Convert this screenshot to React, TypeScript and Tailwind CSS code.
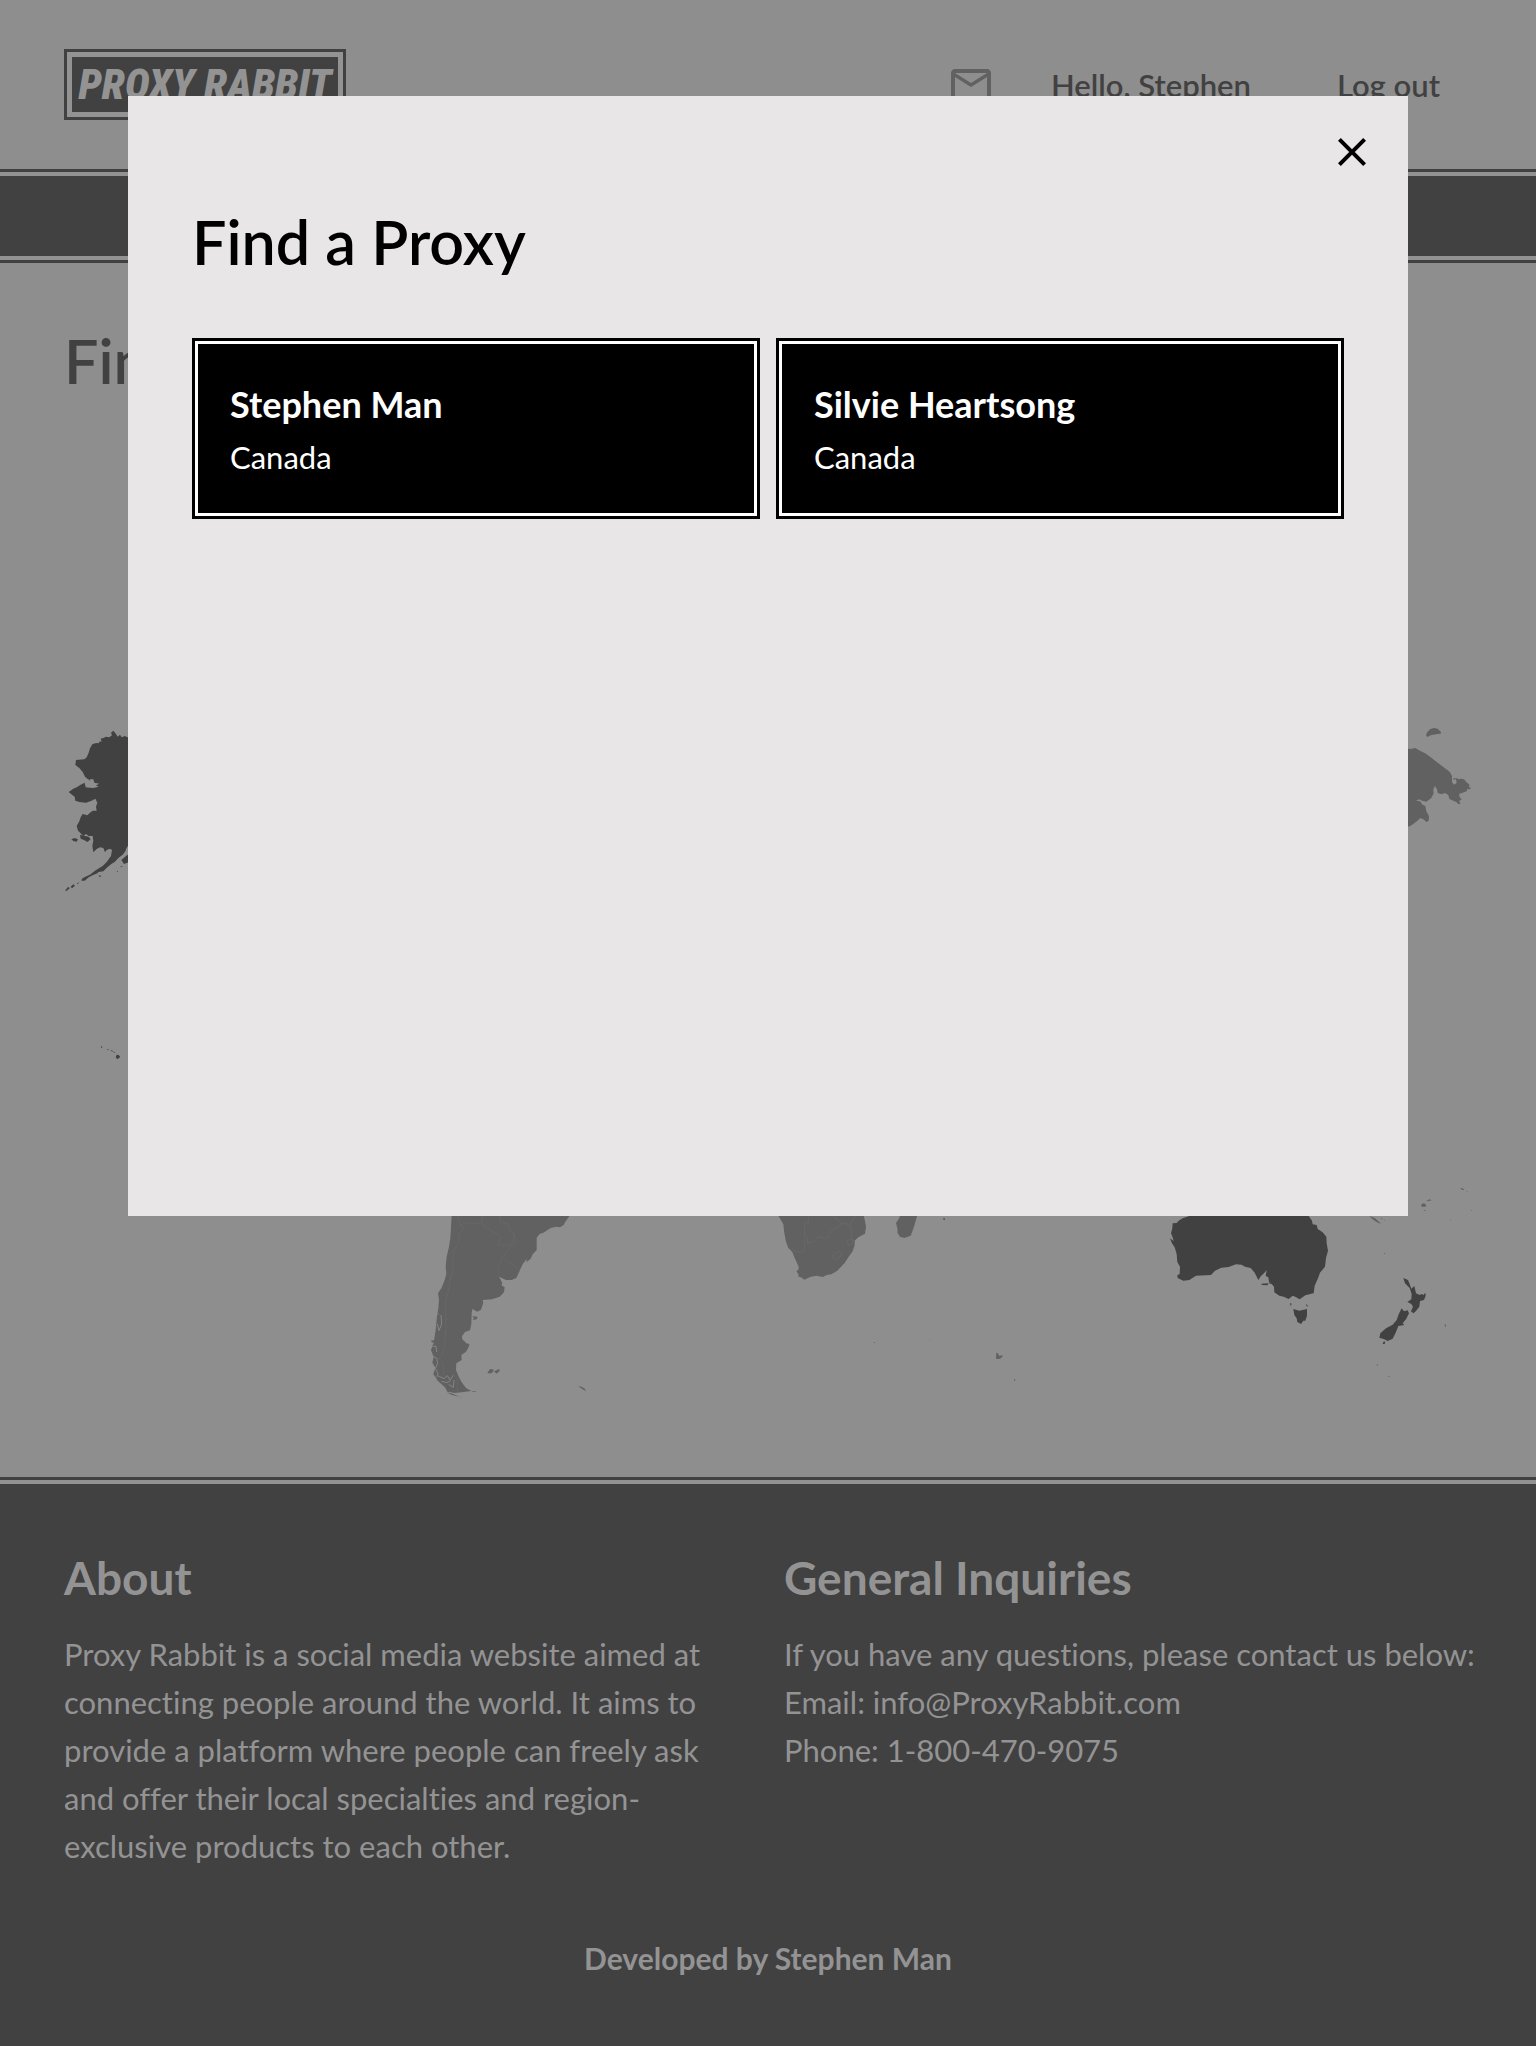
import React from "react";
import { MdClose, MdMailOutline } from "react-icons/md";

const proxies = [
  { name: "Stephen Man", country: "Canada" },
  { name: "Silvie Heartsong", country: "Canada" },
];

function Logo() {
  return (
    <a href="#home" className="flex h-[71px] w-[282px] border-3 border-[#414141] bg-[#949394] p-[5px]">
      <span className="flex min-w-0 flex-1 items-center justify-center bg-[#414141] font-['Roboto_Condensed','Open_Sans_Condensed',Lato,sans-serif] text-[42px] leading-none font-black whitespace-nowrap text-[#949394] italic">
        PROXY RABBIT
      </span>
    </a>
  );
}

function WorldMap() {
  return (
    <svg viewBox="64 720 1408 688" className="block w-full" role="img" aria-label="World map">
      <g transform="translate(50 710) scale(.33333)" fill="#414141">
        <path d="M240 78L232 82 225 78 215 82 210 74 203 80 198 72 190 62 183 68 186 76 178 82 168 80 160 84 152 86 155 96 149 94 146 100 138 99 127 103 120 115 116 128 110 142 103 148 78 150 76 165 88 174 98 186 105 200 112 206 122 212 120 207 130 208 133 218 148 221 138 226 146 230 130 234 118 233 107 232 104 218 92 224 80 232 70 236 56 246 66 254 74 260 76 272 88 276 108 278 125 272 136 266 142 278 138 290 140 302 128 302 120 308 112 316 98 312 92 322 88 334 80 348 84 362 92 370 100 378 108 372 116 378 128 378 130 392 127 408 130 427 140 417 150 412 160 414 165 427 170 420 180 416 186 420 183 438 170 456 158 468 148 474 135 482 120 494 106 500 96 506 94 512 104 512 116 502 128 496 142 490 146 486 160 484 172 472 184 462 194 456 205 444 218 434 226 424 229 415 240 400Z" />
        <path d="M90 374L105 378 116 380 122 388 112 396 102 390 92 386ZM64 388L74 384 84 388 80 395 70 393ZM214 450L228 438 240 430 240 455 222 462ZM45 542L54 531 60 534 50 542ZM62 530L70 523 75 527 66 535ZM80 521L88 516 84 522ZM146 496L155 498 148 501ZM210 470L219 468 214 472ZM200 484L204 483 203 487ZM152 1009L158 1011 154 1014ZM171 1017L177 1018 174 1021ZM180 1021L189 1022 187 1025ZM189 1024L196 1028 193 1029ZM200 1034L206 1035 211 1041 202 1048 197 1042Z" />
      </g>
      <g transform="translate(1390 710) scale(.33333)" fill="#616161">
        <path d="M108 76L112 66 121 57 132 54 143 56 153 66 152 71 143 72 122 76 112 81Z" />
        <path d="M40 114L62 117 76 114 90 122 108 131 122 142 140 156 160 171 179 185 186 198 186 216 192 224 200 219 198 208 189 209 191 205 202 205 205 208 213 206 222 208 229 216 239 225 236 231 244 234 238 238 232 237 230 244 216 249 207 252 209 262 215 268 207 274 212 280 205 283 199 276 190 272 178 267 175 255 165 249 155 253 143 249 141 238 135 228 130 238 131 250 124 264 109 275 96 272 88 268 78 272 90 274 98 284 106 288 109 304 117 319 116 332 110 336 100 328 91 324 78 336 62 347 40 356Z" />
      </g>
      <g transform="translate(410 1200) scale(.33333)" fill="#616161">
        <path d="M126 30L480 30 477 50 467 64 461 75 450 82 438 80 422 84 400 98 389 102 380 113 380 150 368 163 362 176 349 187 350 176 338 193 330 210 319 234 305 240 288 240 267 230 272 239 277 250 274 256 284 262 282 277 269 290 246 298 218 300 220 308 213 329 202 335 187 327 185 340 184 372 180 391 165 396 156 409 157 418 169 430 178 432 176 441 168 455 154 465 155 480 139 490 138 510 145 527 154 545 168 564 184 573 160 576 135 579 112 575 105 562 83 542 70 522 76 503 67 488 71 470 63 450 71 428 77 390 81 348 85 325 87 300 84 280 95 263 104 240 109 222 107 200 110 170 117 140 121 115Z" />
        <path d="M186 349L203 350 200 358 188 360 192 354ZM232 520L240 507 252 509 245 520ZM252 514L268 507 269 512 260 521ZM504 559L514 560 523 565 528 574 516 566ZM184 573L201 574 192 576ZM110 577L130 582 144 588 158 594 148 590 124 584ZM65 420L74 423 70 428 64 426Z" />
        <path d="M78 342H86M93 345L95 372 87 392 82 372M68 440L78 438 80 456M70 470L80 474 83 490 76 506 84 520 80 532M85 528L102 536 112 527 120 540 130 526M95 544L110 548 122 542M116 553L130 562 132 540" fill="none" stroke="#8a8a8a" strokeWidth="2.5" />
        <path d="M144 48L150 75 160 82 158 92 148 102 145 128 132 150 128 185 130 210 120 240 115 275 108 300 106 345 108 385 104 430 96 465 86 474 99 492 102 530M150 78L163 68 190 72 216 68 218 48M216 70L228 84 255 98 274 111 262 134 280 138 300 135 308 128 313 100 298 92 296 72 270 66 268 48M313 105L320 128 300 142 276 175 266 205 266 230M280 176L300 190 315 198 325 212M142 530V576" fill="none" stroke="#6e6e6e" strokeWidth="1.5" />
      </g>
      <g transform="translate(760 1190) scale(.33333)" fill="#616161">
        <path d="M46 60L56 79 70 103 73 130 78 155 85 174 97 186 103 202 116 230 115 240 109 242 116 255 115 260 123 262 133 269 152 260 170 257 189 261 200 255 214 253 232 242 254 219 266 200 278 184 284 165 284 152 295 142 315 131 318 110 315 94 308 60Z" />
        <path d="M424 60L418 84 408 99 412 115 413 130 420 140 433 144 452 137 461 113 471 79 474 60ZM549 84L555 84 555 90 550 89ZM342 456L345 456 345 459 342 458ZM507 447L510 448 509 450ZM709 488L714 490 717 497 729 496 724 504 716 507 708 506ZM762 568L766 568 765 572 762 572Z" />
        <path d="M96 178L104 184 122 188 134 180V97H146V60M136 130L142 143 143 160 160 155 175 140 194 145 203 140 214 123 230 113 246 100 225 83 222 70M246 100L268 103 280 90 285 76M268 103L275 125 276 148 284 153M265 148L276 148 278 162 267 166 262 157ZM220 195L234 184 244 187 243 198 234 203 228 211 219 205Z" fill="none" stroke="#707070" strokeWidth="1.5" />
      </g>
      <g transform="translate(1150 1170) scale(.33333)">
        <path fill="#414141" d="M130 120L118 138 98 145 86 152 80 159 68 160 67 175 63 190 68 202 71 213 60 205 66 220 74 232 80 252 82 276 90 290 89 312 82 316 83 324 100 332 118 330 138 317 183 315 195 302 214 293 236 291 258 283 275 284 285 290 302 294 314 308 325 330 333 318 342 310 350 300 347 318 355 322 357 336 362 338 372 350 373 367 388 377 401 380 416 387 428 377 437 381 449 388 466 376 484 371 491 370 494 347 504 325 510 308 525 290 528 264 534 242 530 220 529 200 518 187 503 177 500 165 488 163 486 152 476 138 480 120Z" />
        <path fill="#414141" d="M334 341L356 340 352 346 336 345ZM357 336L368 341 360 342ZM420 399L425 401 422 409ZM467 402L473 406 472 412ZM430 417L448 422 471 417 471 437 466 452 460 452 453 462 442 456 440 445 433 435ZM760 324L774 330 780 345 784 356 793 348 798 370 809 375 815 372 820 375 826 368 827 377 822 390 810 393 808 410 796 425 790 430 783 424 789 410 784 402 772 396 784 388 785 372 779 354 765 340ZM755 415L762 424 773 421 777 430 768 448 758 460 763 465 745 468 738 486 728 506 713 513 703 508 688 503 691 490 708 475 728 464 740 450 746 433ZM702 513L706 518 703 523 698 521Z" />
        <path fill="#616161" d="M658 138L674 144 688 156 692 162 680 156 668 148ZM814 103L822 100 828 104 827 110 815 110ZM828 94L838 88 845 91 836 93ZM930 55L938 55 943 60 937 60ZM950 63L954 64 952 66ZM694 143L698 146 695 149ZM702 150L705 151 704 154ZM820 120L828 121 823 123ZM963 120L966 121 965 124ZM900 148L904 149 903 151ZM883 466L887 462 888 472ZM679 584L683 582 683 588ZM702 249L705 249 705 252 702 251ZM715 618L719 618 718 621 715 620Z" />
      </g>
    </svg>
  );
}

function Footer() {
  return (
    <footer className="border-t-3 border-[#414141] bg-[#939293] pt-1 text-[#949394]">
      <div className="bg-[#414141] px-16 pt-[58px] pb-16">
        <div className="grid grid-cols-2 gap-8">
          <section>
            <h2 className="text-[46px] leading-[72px] font-bold">About</h2>
            <p className="mt-4 text-[31px] leading-12">
              Proxy Rabbit is a social media website aimed at connecting people around the world. It
              aims to provide a platform where people can freely ask and offer their local
              specialties and region-exclusive products to each other.
            </p>
          </section>
          <section>
            <h2 className="text-[46px] leading-[72px] font-bold">General Inquiries</h2>
            <p className="mt-4 text-[31px] leading-12 whitespace-nowrap">
              If you have any questions, please contact us below:
              <br />
              Email: info@ProxyRabbit.com
              <br />
              Phone: 1-800-470-9075
            </p>
          </section>
        </div>
        <p className="mt-16 text-center text-[30px] leading-12 font-bold">Developed by Stephen Man</p>
      </div>
    </footer>
  );
}

function ProxyDialog() {
  return (
    <div className="absolute inset-0 px-32 pt-24">
      <div role="dialog" aria-modal="true" aria-labelledby="dialog-title" className="min-h-[1120px] bg-[#e8e6e7] px-16 pt-8 text-black">
        <div className="-mr-8 flex justify-end">
          <button type="button" aria-label="Close" className="block size-12">
            <MdClose className="size-12" />
          </button>
        </div>
        <h2 id="dialog-title" className="mt-[18px] text-[61px] leading-24 font-semibold">Find a Proxy</h2>
        <div className="mt-12 grid grid-cols-2 gap-4">
          {proxies.map((p) => (
            <button type="button" key={p.name} className="border-3 border-black bg-white p-[3px] text-left text-white">
              <div className="bg-black px-8 py-8">
                <div className="text-[36px] leading-[57px] font-bold">{p.name}</div>
                <div className="text-[31px] leading-12">{p.country}</div>
              </div>
            </button>
          ))}
        </div>
      </div>
    </div>
  );
}

export default function App() {
  return (
    <div className="relative flex min-h-screen flex-col bg-[#8e8e8e] font-[Lato,sans-serif] text-[#414141] [font-variant-ligatures:none]">
      <header className="flex items-center justify-between px-16 py-[49px]">
        <Logo />
        <div className="flex items-center pr-8 text-[31px] leading-12 font-semibold">
          <a href="#messages" aria-label="Messages" className="mr-14 text-[#616161]">
            <MdMailOutline className="size-12" />
          </a>
          <a href="#profile" className="mr-[86px]">Hello, Stephen</a>
          <a href="#logout">Log out</a>
        </div>
      </header>
      <nav aria-label="Main" className="border-y-3 border-[#414141] bg-[#939293] py-1">
        <div className="h-20 bg-[#414141]" />
      </nav>
      <main className="flex-1 px-16 pt-[50px] pb-[69px]">
        <h1 className="text-[61px] leading-24 font-semibold">Find a Proxy</h1>
        <div className="mt-[311px]">
          <WorldMap />
        </div>
      </main>
      <Footer />
      <ProxyDialog />
    </div>
  );
}
